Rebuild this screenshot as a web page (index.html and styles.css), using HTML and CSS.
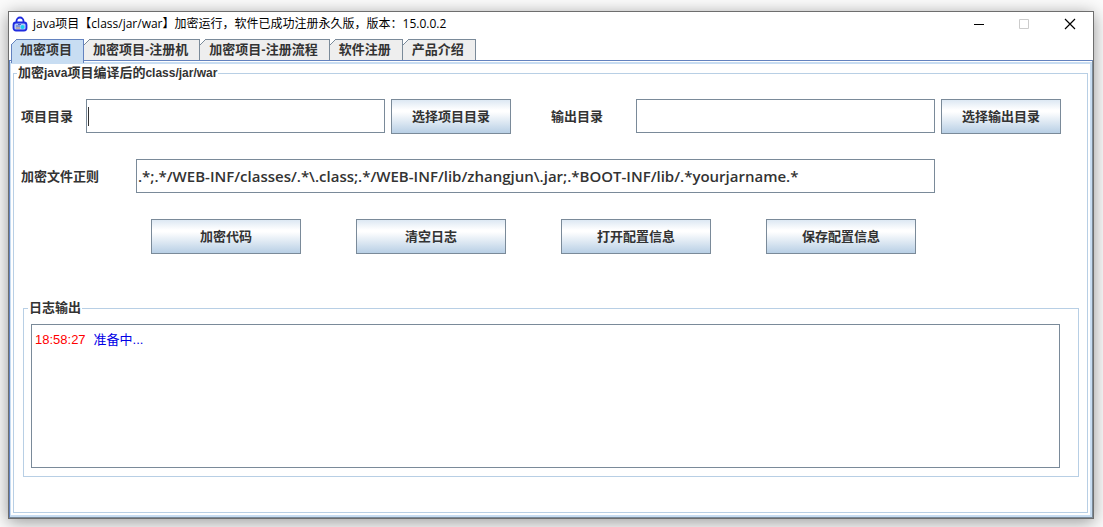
FILE: index.html
```html
<!DOCTYPE html>
<html lang="zh-CN">
<head>
    <meta charset="UTF-8">
    <meta name="viewport" content="width=device-width, initial-scale=1.0">
    <title>java项目加密运行</title>
    <link rel="stylesheet" href="styles.css">
</head>
<body>

    <div class="window">
        <header class="titlebar">
            <svg class="app-icon" width="16" height="16" viewBox="0 0 16 16">
                <path d="M4.500 7V5a3.500 3.500 0 0 1 7 0v2" fill="none" stroke="#1f2be0" stroke-width="1.800"/>
                <rect x="1.500" y="6.500" width="13" height="8" rx="2.500" fill="#b4cbf5" stroke="#1f2be0" stroke-width="1.800"/>
                <path d="M4 10h4M6 8.500h3" stroke="#4a63d0" stroke-width="1"/>
                <path d="M4 12h4" stroke="#b98a6a" stroke-width="1"/>
                <circle cx="10.500" cy="11" r="2" fill="#19d3f0"/>
            </svg>
            <h1>java项目【class/jar/war】加密运行，软件已成功注册永久版，版本：15.0.0.2</h1>
            <div class="window-buttons">
                <button type="button" aria-label="最小化">
                    <svg width="12" height="12" viewBox="0 0 12 12"><path d="M2 6.500h10" stroke="#000"/></svg>
                </button>
                <button type="button" aria-label="最大化" disabled>
                    <svg width="12" height="12" viewBox="0 0 12 12"><path d="M1.500 1.500h9v9h-9z" fill="none" stroke="#ccc"/></svg>
                </button>
                <button type="button" aria-label="关闭">
                    <svg width="12" height="12" viewBox="0 0 12 12"><path d="M1 1l10 10M11 1L1 11" stroke="#000" stroke-width="1.200"/></svg>
                </button>
            </div>
        </header>

        <nav class="tabs" role="tablist">
            <button type="button" role="tab" class="tab active" aria-selected="true">加密项目</button>
            <button type="button" role="tab" class="tab">加密项目-注册机</button>
            <button type="button" role="tab" class="tab">加密项目-注册流程</button>
            <button type="button" role="tab" class="tab">软件注册</button>
            <button type="button" role="tab" class="tab">产品介绍</button>
        </nav>

        <main class="panel">
            <form class="panel-body">
                <fieldset class="group main-group">
                    <legend>加密<span class="latin">java</span>项目编译后的<span class="latin">class/jar/war</span></legend>

                    <div class="row">
                        <div class="field">
                            <label for="projectDir">项目目录</label>
                            <input type="text" id="projectDir" class="focused">
                            <button type="button" class="btn">选择项目目录</button>
                        </div>
                        <div class="field">
                            <label for="outputDir" class="wide">输出目录</label>
                            <input type="text" id="outputDir">
                            <button type="button" class="btn">选择输出目录</button>
                        </div>
                    </div>

                    <div class="row regex-row">
                        <label for="fileRegex">加密文件正则</label>
                        <input type="text" id="fileRegex" value=".*;.*/WEB-INF/classes/.*\.class;.*/WEB-INF/lib/zhangjun\.jar;.*BOOT-INF/lib/.*yourjarname.*">
                    </div>

                    <div class="actions">
                        <button type="button" class="btn">加密代码</button>
                        <button type="button" class="btn">清空日志</button>
                        <button type="button" class="btn">打开配置信息</button>
                        <button type="button" class="btn">保存配置信息</button>
                    </div>

                    <fieldset class="group log-group">
                        <legend>日志输出</legend>
                        <div class="log" role="log">
                            <p><time>18:58:27</time><span>准备中...</span></p>
                        </div>
                    </fieldset>
                </fieldset>
            </form>
        </main>
    </div>

</body>
</html>
```

FILE: styles.css
```css
/* General Styles */
* {
    box-sizing: border-box;
}

body {
    margin: 0;
    height: 100vh;
    padding: 11px 9px 8px 8px;
    display: flex;
    background-color: #fbfbfb;
    font-family: "Liberation Sans", "Noto Sans CJK SC", sans-serif;
    font-size: 13px;
    line-height: 16px;
    color: #333;
    overflow: hidden;
}

button, input {
    font: inherit;
    color: inherit;
    margin: 0;
    border-radius: 0;
}

.window {
    flex: 1;
    display: flex;
    flex-direction: column;
    background-color: #fff;
    border: 1px solid #6e6e6e;
    box-shadow: 0 3px 16px rgba(0, 0, 0, 0.4);
}

/* Title bar */
.titlebar {
    display: flex;
    align-items: center;
    height: 24px;
    padding-left: 3px;
    color: #000;
}

.titlebar h1 {
    flex: 1;
    margin: 0 0 0 5px;
    font-family: "Open Sans", "Noto Sans CJK SC", sans-serif;
    font-size: 12px;
    font-weight: normal;
}

.window-buttons {
    display: flex;
}

.window-buttons button {
    display: flex;
    align-items: center;
    justify-content: center;
    width: 46px;
    height: 24px;
    padding: 0;
    border: none;
    background: none;
}

/* Tabs */
.tabs {
    display: flex;
    height: 21px;
    margin-top: 3px;
    padding-left: 2px;
}

.tab {
    position: relative;
    height: 21px;
    padding: 0 11px 0 9px;
    border: solid #7a8a99;
    border-width: 1px 1px 0 0;
    background-color: #eee;
    font-weight: bold;
    line-height: 20px;
}

/* cut corner */
.tab::before {
    content: "";
    position: absolute;
    top: -1px;
    left: 0;
    width: 6px;
    height: 6px;
    background: linear-gradient(135deg, #fff 46%, #7a8a99 46%, #7a8a99 58%, transparent 58%);
}

.tab.active {
    height: 24px;
    padding-left: 8px;
    padding-bottom: 3px;
    border-color: #6382bf;
    border-left-width: 1px;
    background-color: #c8ddf2;
}

.tab.active::before {
    left: -1px;
    background: linear-gradient(135deg, #fff 46%, #6382bf 46%, #6382bf 58%, transparent 58%);
}

.panel {
    flex: 1;
    display: flex;
    border: 1px solid #6382bf;
    border-right-color: #7a8a99;
    border-bottom-color: #7a8a99;
}

.panel-body {
    flex: 1;
    display: flex;
    margin-top: 1px;
    padding: 2px;
    border: solid #c8ddf2;
    border-width: 2px 2px 2px 1px;
}

/* Titled boxes */
.group {
    min-width: 0;
    margin: 0;
    border: 1px solid #b8cfe5;
}

.group legend {
    padding: 0 1px;
    font-weight: bold;
    line-height: 14px;
}

.latin {
    font-size: 12px;
}

.main-group {
    flex: 1;
    padding: 19px 26px 0 7px;
}

.main-group > legend {
    margin-left: -4px;
}

label {
    font-weight: bold;
    width: 65px;
    height: 34px;
    line-height: 36px;
}

label.wide {
    width: 85px;
}

input {
    flex: 1;
    min-width: 0;
    height: 34px;
    padding: 0 1px;
    border: 1px solid #7a8a99;
    outline: none;
    font-family: "Open Sans", "Noto Sans CJK SC", sans-serif;
    font-size: 15px;
    font-weight: 600;
}

input.focused {
    background: linear-gradient(#333, #333) 1px center / 1px 19px no-repeat #fff;
}

.btn {
    height: 35px;
    padding: 0;
    border: 1px solid #7a8a99;
    background: linear-gradient(#dde8f3, #fff 30%, #fff 36%, #b8cfe5);
    font-weight: bold;
}

.row {
    display: flex;
    gap: 40px;
}

.field {
    flex: 1;
    display: flex;
    align-items: flex-start;
}

.field:first-child {
    flex: 0 1 490px;
}

.field .btn {
    width: 120px;
    margin-left: 6px;
}

.regex-row {
    gap: 0;
    margin-top: 25px;
    padding-right: 126px;
}

.regex-row label {
    width: 115px;
}

.actions {
    display: flex;
    gap: 55px;
    margin-top: 26px;
    padding-left: 130px;
}

.actions .btn {
    width: 150px;
}

/* Log */
.log-group {
    margin: 47px -18px 0 2px;
    padding: 9px 18px 8px 7px;
}

.log-group legend {
    margin-left: -3px;
}

.log {
    height: 144px;
    padding: 7px 3px;
    border: 1px solid #7a8a99;
}

.log p {
    margin: 0;
    color: #0000e6;
}

.log time {
    margin-right: 8px;
    color: #f00;
}
```
